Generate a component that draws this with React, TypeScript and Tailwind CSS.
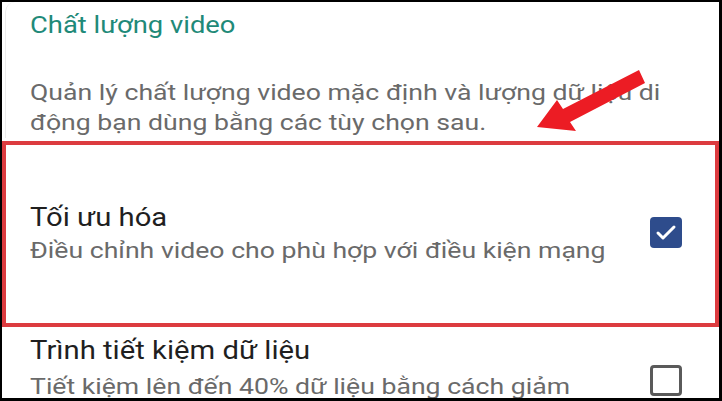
import { Check } from 'lucide-react';

const font = { fontFamily: 'Roboto, "Noto Sans", Arial, sans-serif' };

function Row({
  title,
  subtitle,
  checked,
  gap,
}: {
  title: string;
  subtitle: string;
  checked: boolean;
  gap: string;
}) {
  return (
    <div className="flex items-center justify-between pl-[24px] pr-[33px]">
      <div className="flex flex-col">
        <div className="text-[25px] leading-[31px] text-[#1f1f1f] whitespace-nowrap origin-left scale-x-[1.17]">
          {title}
        </div>
        <div
          className={`text-[22px] leading-[30px] text-[#6a6a6a] whitespace-nowrap origin-left scale-x-[1.21] ${gap}`}
        >
          {subtitle}
        </div>
      </div>
      {checked ? (
        <div className="w-[32px] h-[31px] rounded-[4px] bg-[#2e4c8c] flex items-center justify-center mt-[-3px]">
          <Check className="size-[24px] text-white" strokeWidth={3} />
        </div>
      ) : (
        <div className="w-[32px] h-[31px] rounded-[4px] border-[3px] border-[#5a5a5a] mt-[24px]" />
      )}
    </div>
  );
}

export default function App() {
  return (
    <div
      className="w-[722px] h-[401px] bg-black pt-[2px] pl-[2px] pr-[3px] pb-[3px]"
      style={font}
    >
      <div className="relative w-full h-full bg-white overflow-hidden">
        <div className="ml-[3px] pl-[24px] pt-[9px] border-l border-[#ececec] rounded-tl-[10px]">
          <div className="text-[24px] leading-[28px] text-[#1f8a79] origin-left scale-x-[1.14] whitespace-nowrap">
            Chất lượng video
          </div>
          <div className="mt-[39px] text-[22px] leading-[30px] text-[#6a6a6a] origin-left scale-x-[1.21] whitespace-nowrap">
            Quản lý chất lượng video mặc định và lượng dữ liệu di
            <br />
            động bạn dùng bằng các tùy chọn sau.
          </div>
        </div>

        <div className="mt-[3px] border-4 border-[#dc3b3f] py-[57px]">
          <Row
            title="Tối ưu hóa"
            subtitle="Điều chỉnh video cho phù hợp với điều kiện mạng"
            checked
            gap="mt-[3px]"
          />
        </div>

        <div className="pt-[8px] pl-[4px] pr-[4px]">
          <Row
            title="Trình tiết kiệm dữ liệu"
            subtitle="Tiết kiệm lên đến 40% dữ liệu bằng cách giảm"
            checked={false}
            gap="mt-[6px]"
          />
        </div>

        <svg
          className="absolute left-0 top-0 pointer-events-none"
          width="720"
          height="400"
          viewBox="-2 -2 720 400"
        >
          <polygon
            points="533,123 553,96 559,105 635,66 641,79 566,118 572,127"
            fill="#ec1c24"
          />
        </svg>
      </div>
    </div>
  );
}
